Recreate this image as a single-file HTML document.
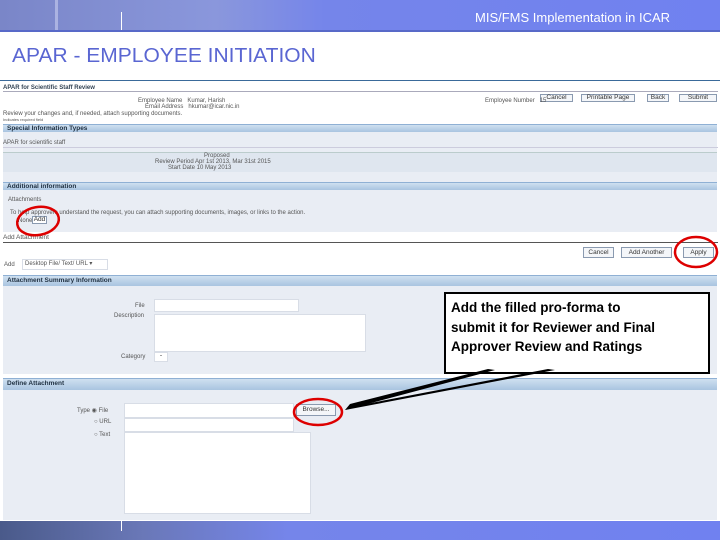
<!DOCTYPE html>
<html><head><style>
*{margin:0;padding:0;box-sizing:border-box}
body{width:720px;height:540px;position:relative;background:#fff;font-family:"Liberation Sans",sans-serif;overflow:hidden}
.a{position:absolute}
.t{font-size:6px;color:#555;white-space:nowrap}
.hb{position:absolute;left:3px;width:714px;background:linear-gradient(#cfe0f0,#a9c4e0);border-top:1px solid #8fb0d4;font-size:6.5px;font-weight:bold;color:#234;padding-left:4px}
.pn{position:absolute;left:3px;width:714px;background:#e9edf4}
.btn{position:absolute;border:1px solid #8a9ab0;background:#f4f6f9;font-size:6.5px;color:#333;text-align:center}
.in{position:absolute;background:#fff;border:1px solid #d8dde6}
</style></head><body>
<div class="a" style="left:0;top:0;width:720px;height:30px;background:linear-gradient(90deg,#7a86c8 0%,#8a97dc 30%,#7585ea 45%,#7081f0 100%)"></div>
<div class="a" style="left:55px;top:0;width:3px;height:30px;background:#c9cff0;opacity:.6"></div>
<div class="a" style="left:121px;top:12px;width:1px;height:18px;background:#fff"></div>
<div class="a" style="left:0;top:30px;width:720px;height:2px;background:#5869c8"></div>
<div class="a" style="left:475px;top:10px;font-size:13px;color:#fff">MIS/FMS Implementation in ICAR</div>
<div class="a" style="left:12px;top:45px;font-size:20px;color:#5a66d2;transform:scaleX(1.05);transform-origin:left">APAR - EMPLOYEE INITIATION</div>

<div class="a" style="left:0;top:80px;width:720px;height:1px;background:#3a6a9a"></div>
<div class="a t" style="left:3px;top:85px;font-weight:bold;color:#345">APAR for Scientific Staff Review</div>
<div class="a" style="left:3px;top:91px;width:715px;height:1px;background:#aab"></div>
<div class="btn" style="left:540px;top:94px;width:33px;height:8px;line-height:6px">Cancel</div>
<div class="btn" style="left:581px;top:94px;width:54px;height:8px;line-height:6px">Printable Page</div>
<div class="btn" style="left:647px;top:94px;width:22px;height:8px;line-height:6px">Back</div>
<div class="btn" style="left:679px;top:94px;width:38px;height:8px;line-height:6px">Submit</div>
<div class="a t" style="left:138px;top:98px">Employee Name &nbsp; Kumar, Harish</div>
<div class="a t" style="left:145px;top:104px">Email Address &nbsp; hkumar@icar.nic.in</div>
<div class="a t" style="left:485px;top:98px">Employee Number &nbsp; 15</div>
<div class="a t" style="left:3px;top:111px">Review your changes and, if needed, attach supporting documents.</div>
<div class="a t" style="left:3px;top:117px;font-size:4px">Indicates required field</div>

<div class="hb" style="top:124px;height:8px;line-height:7px">Special Information Types</div>
<div class="pn" style="top:132px;height:50px"></div>
<div class="a t" style="left:3px;top:140px">APAR for scientific staff</div>
<div class="a" style="left:3px;top:147px;width:715px;height:1px;background:#ccd"></div>
<div class="a" style="left:3px;top:152px;width:714px;height:20px;background:#dfe6ef;border-top:1px solid #bcc"></div>
<div class="a t" style="left:204px;top:153px">Proposed</div>
<div class="a t" style="left:155px;top:159px">Review Period Apr 1st 2013, Mar 31st 2015</div>
<div class="a t" style="left:168px;top:165px">Start Date 10 May 2013</div>

<div class="hb" style="top:182px;height:8px;line-height:7px">Additional information</div>
<div class="pn" style="top:190px;height:42px"></div>
<div class="a t" style="left:8px;top:197px">Attachments</div>
<div class="a t" style="left:10px;top:210px">To help approvers understand the request, you can attach supporting documents, images, or links to the action.</div>
<div class="a t" style="left:18px;top:218px">None</div>
<div class="btn" style="left:32px;top:216px;width:15px;height:8px;line-height:6px;background:#fff">Add</div>

<div class="a t" style="left:3px;top:234px;font-size:6.5px">Add Attachment</div>
<div class="a" style="left:3px;top:242px;width:715px;height:1px;background:#555"></div>
<div class="btn" style="left:583px;top:247px;width:31px;height:11px;line-height:9px">Cancel</div>
<div class="btn" style="left:621px;top:247px;width:51px;height:11px;line-height:9px">Add Another</div>
<div class="btn" style="left:683px;top:247px;width:31px;height:11px;line-height:9px">Apply</div>
<div class="a t" style="left:4px;top:262px">Add</div>
<div class="in" style="left:22px;top:259px;width:86px;height:11px;font-size:6px;color:#555;padding-left:2px;line-height:9px">Desktop File/ Text/ URL ▾</div>

<div class="hb" style="top:275px;height:11px;line-height:10px">Attachment Summary Information</div>
<div class="pn" style="top:286px;height:88px"></div>
<div class="a t" style="left:135px;top:303px">File</div>
<div class="in" style="left:154px;top:299px;width:145px;height:13px"></div>
<div class="a t" style="left:114px;top:313px">Description</div>
<div class="in" style="left:154px;top:314px;width:212px;height:38px"></div>
<div class="a t" style="left:121px;top:354px">Category</div>
<div class="in" style="left:154px;top:352px;width:14px;height:10px;font-size:6px;text-align:center">-</div>

<div class="hb" style="top:378px;height:12px;line-height:10px">Define Attachment</div>
<div class="pn" style="top:390px;height:130px"></div>
<div class="a t" style="left:77px;top:407px">Type ◉ File</div>
<div class="in" style="left:124px;top:403px;width:170px;height:15px"></div>
<div class="btn" style="left:296px;top:404px;width:40px;height:12px;line-height:10px">Browse...</div>
<div class="a t" style="left:94px;top:419px">○ URL</div>
<div class="in" style="left:124px;top:418px;width:170px;height:14px"></div>
<div class="a t" style="left:94px;top:432px">○ Text</div>
<div class="in" style="left:124px;top:432px;width:187px;height:82px"></div>

<div class="a" style="left:0;top:521px;width:720px;height:19px;background:linear-gradient(90deg,#4a5a8a 0%,#6a78b8 20%,#7585ea 40%,#7081f0 100%)"></div>
<div class="a" style="left:121px;top:521px;width:1px;height:10px;background:#fff"></div>

<div class="a" style="left:444px;top:292px;width:266px;height:82px;border:2px solid #000;background:#fff;font-size:13.5px;font-weight:bold;line-height:19.5px;padding:4px 5px;color:#000;white-space:nowrap">Add the filled pro-forma to<br>submit it for Reviewer and Final<br>Approver Review and Ratings</div>

<svg class="a" style="left:0;top:0" width="720" height="540">
<polygon points="495,370 345,410 350,404 488,369" fill="#000"/>
<polygon points="555,370 345,410 350,407 548,369" fill="#000"/>
<ellipse cx="38" cy="221" rx="21" ry="14" fill="none" stroke="#d00" stroke-width="2.5" transform="rotate(-10 38 221)"/>
<ellipse cx="696" cy="252" rx="21" ry="15" fill="none" stroke="#d00" stroke-width="2.5"/>
<ellipse cx="318" cy="412" rx="24" ry="13" fill="none" stroke="#d00" stroke-width="2.5"/>
</svg>
</body></html>
